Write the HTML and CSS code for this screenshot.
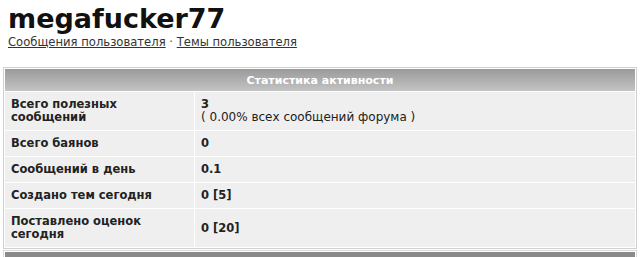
FILE: index.html
```html
<!DOCTYPE html>
<html lang="ru">
<head>
  <meta charset="utf-8">
  <title>megafucker77</title>
  <link rel="stylesheet" href="styles.css">
</head>
<body>
  <h1 class="username">megafucker77</h1>
  <div class="user-links">
    <a href="#">Сообщения пользователя</a> · <a href="#">Темы пользователя</a>
  </div>

  <table class="stats">
    <tr>
      <th colspan="2">Статистика активности</th>
    </tr>
    <tr>
      <td class="label">Всего полезных<br>сообщений</td>
      <td class="value">3<br><span class="note">( 0.00% всех сообщений форума )</span></td>
    </tr>
    <tr>
      <td class="label">Всего баянов</td>
      <td class="value">0</td>
    </tr>
    <tr>
      <td class="label">Сообщений в день</td>
      <td class="value">0.1</td>
    </tr>
    <tr>
      <td class="label">Создано тем сегодня</td>
      <td class="value">0 [5]</td>
    </tr>
    <tr>
      <td class="label">Поставлено оценок<br>сегодня</td>
      <td class="value">0 [20]</td>
    </tr>
  </table>

  <div class="next-block">
    <div class="next-head"></div>
  </div>
</body>
</html>
```

FILE: styles.css
```css
body {
  margin: 0;
  background: #fff;
  color: #222;
  font-family: "DejaVu Sans", Verdana, sans-serif;
  overflow: hidden;
}

.username {
  margin: 3px 0 0 8px;
  font-size: 27px;
  line-height: 31px;
  font-weight: bold;
  color: #111;
}

.user-links {
  margin-left: 8px;
  font-size: 11.6px;
  line-height: 16px;
  color: #555;
}

.user-links a {
  color: #333;
  text-decoration: underline;
}

.stats {
  width: 634px;
  margin: 17px 3px 0 3px;
  border: 1px solid #cfcfcf;
  border-spacing: 1px;
  background: #fff;
  font-size: 11.5px;
  line-height: 13px;
}

.stats th {
  height: 22px;
  padding: 0;
  background: linear-gradient(#9a9a9a, #c4c4c4);
  color: #fff;
  font-size: 11px;
  font-weight: bold;
  text-align: center;
}

.stats td {
  padding: 6px;
  background: #efefef;
  font-weight: bold;
  vertical-align: middle;
  color: #222;
}

.stats td.label {
  width: 177px;
}

.stats .note {
  font-size: 12px;
  font-weight: normal;
}

.next-block {
  margin: 1px 3px 0 3px;
  border: 1px solid #d8d8d8;
  border-bottom: none;
  padding: 1px 1px 0 1px;
}

.next-head {
  height: 12px;
  background: #8a8a8a;
}
```
